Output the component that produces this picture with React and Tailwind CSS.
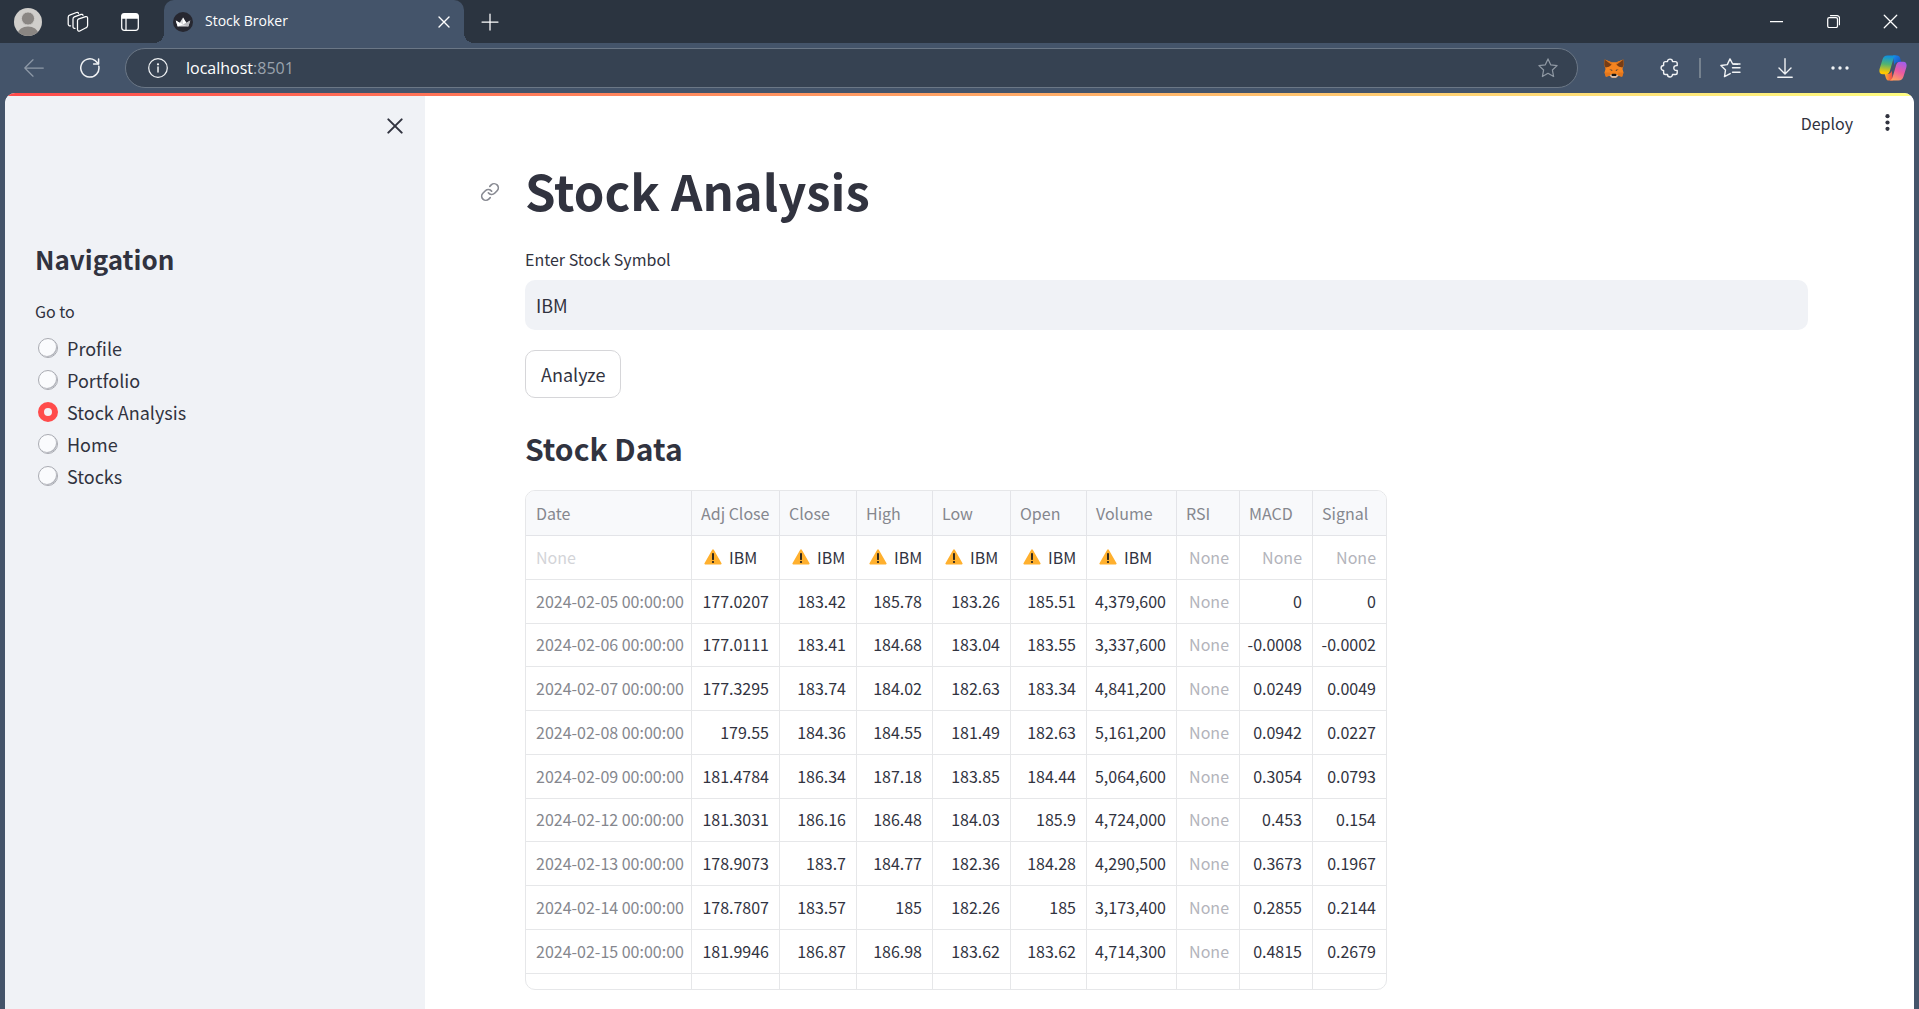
import { Link } from "lucide-react";

const SANS = "font-['Noto_Sans_CJK_SC',sans-serif]";
const CHROME = "font-['Open_Sans','Noto_Sans',sans-serif]";

const stroke = {
  fill: "none",
  stroke: "currentColor",
  strokeWidth: 1.25,
  strokeLinecap: "round",
  strokeLinejoin: "round",
};

function Avatar() {
  return (
    <svg width="28" height="28" viewBox="0 0 28 28">
      <defs>
        <clipPath id="avatar-disc">
          <circle cx="14" cy="14" r="14" />
        </clipPath>
      </defs>
      <g clipPath="url(#avatar-disc)">
        <rect width="28" height="28" fill="#d0cecb" />
        <ellipse cx="14" cy="25.5" rx="10" ry="7" fill="#8a8683" />
        <circle cx="14" cy="10.5" r="6.6" fill="#8a8683" stroke="#d0cecb" strokeWidth="1" />
      </g>
    </svg>
  );
}

function Workspaces() {
  return (
    <svg width="22" height="22" viewBox="0 0 22 22" {...stroke}>
      <path d="M11.2 8.200 18.600 5.600a1.500 1.500 0 0 1 2 1.400v7.600a2.400 2.400 0 0 1-1.600 2.200l-6.200 3.200a1.600 1.600 0 0 1-2.300-1.400V10a2 2 0 0 1 .7-1.800Z" />
      <path d="M8 17.300c-1.200.3-2-.4-2-1.600V8c0-1 .5-1.700 1.400-2.100l6.700-2.500c.9-.3 1.600 0 1.900.9" />
      <path d="M3.600 14.900C2.100 15.100 1.200 14.200 1.200 13V6.200c0-1 .5-1.800 1.400-2.100L9.500 1.500c.9-.3 1.700 0 2 .8" />
    </svg>
  );
}

function TabActions() {
  return (
    <svg width="18" height="18" viewBox="0 0 18 18" {...stroke}>
      <rect x="0.7" y="0.7" width="16.6" height="16.6" rx="2.8" />
      <path d="M1 5V3.500A2.500 2.500 0 0 1 3.500 1h11A2.500 2.500 0 0 1 17 3.500V5Z" fill="currentColor" />
      <path d="M5 5.500V17" />
    </svg>
  );
}

function Crown() {
  return (
    <svg width="20" height="20" viewBox="0 0 20 20">
      <circle cx="10" cy="10" r="10" fill="#262730" />
      <path d="M2.800 8.600 6.600 11 10 5.600 13.400 11l3.900-2.400-2 6H4.700Z" fill="#d9d9dc" />
      <path d="M2.800 8.600 10 12.500 4.700 14.600ZM10 5.600V12.500L13.400 11Z" fill="#fff" />
      <path d="m17.300 8.600-7.300 3.900 5.300 2.100Z" fill="#b9b9be" />
    </svg>
  );
}

function Cross({ size, width = 1.4 }) {
  return (
    <svg width={size} height={size} viewBox="0 0 12 12" {...stroke} strokeWidth={width}>
      <path d="m1 1 10 10M11 1 1 11" />
    </svg>
  );
}

function Fox() {
  return (
    <svg width="20" height="19" viewBox="0 0 20 19">
      <path d="M.6.4 7.500 3.200h5L19.400.4l.3 5.600-1.200 4 1 3.600-1.400 4.200-3.800-1-2.200 2H7.900l-2.200-2-3.800 1L.5 13.600l1-3.600L.3 6Z" fill="#f5841f" />
      <path d="M.6.4 8.400 6.200 7.500 3.200ZM19.400.4l-7.800 5.800.9-3Z" fill="#e2761b" />
      <path d="M.6.4 7.600 5.700 5 7.700 1.500 8.600.3 6ZM19.400.4l-7 5.300L15 7.700l3.500.9L19.700 6Z" fill="#763d16" />
      <path d="m.5 13.600 5.200-.1.900 2.800-.9.500-3.800 1ZM19.500 13.600l-5.200-.1-.9 2.800.9.500 3.800 1Z" fill="#e4761b" />
      <path d="m5.300 10.500 2.700.2.400 1.200ZM14.700 10.500l-2.700.2-.4 1.200Z" fill="#233447" />
      <path d="m5.700 16.500 2.200-1.300h4.200l2.200 1.300-2.200 2.200H7.900Z" fill="#d7c1b3" />
      <path d="m7.900 15.300.5-.5h3.200l.5.500.2 1.800H7.700Z" fill="#161616" />
    </svg>
  );
}

function Puzzle() {
  return (
    <svg width="20" height="20" viewBox="0 0 20 20" {...stroke} strokeWidth="1.4">
      <path d="M7.500 3.600a2.500 2.500 0 0 1 5 0h2.900a1.800 1.800 0 0 1 1.800 1.800v2.200h-1a2.400 2.400 0 0 0 0 4.800h1v2.300a1.800 1.800 0 0 1-1.800 1.800h-2.900a2.500 2.500 0 0 1-5 0H5.400a1.800 1.800 0 0 1-1.800-1.800v-2.200a2.500 2.500 0 0 1 0-5V5.400a1.800 1.800 0 0 1 1.800-1.800Z" />
    </svg>
  );
}

function Star() {
  return (
    <svg width="20" height="20" viewBox="0 0 20 20" {...stroke}>
      <path d="m10 .9 2.700 5.900 6.400.8-4.700 4.400 1.200 6.500L10 15.300l-5.600 3.200L5.600 12 .9 7.600l6.400-.8Z" />
    </svg>
  );
}

function Favorites() {
  return (
    <svg width="21" height="20" viewBox="0 0 21 20" {...stroke} strokeWidth="1.4">
      <path d="M17.500 6.400 12.700 6 10 .9 7.300 6.600.9 7.500 5.500 12l-1 6.600 5.700-3" />
      <path d="M12.500 9.800h7.500M12.500 14.200h7.500M13.500 6h6.500" />
    </svg>
  );
}

function Download() {
  return (
    <svg width="16" height="20" viewBox="0 0 16 20" {...stroke} strokeWidth="1.4">
      <path d="M8 .8v15M2 10l6 6 6-6M.8 19.200h14.400" />
    </svg>
  );
}

function Copilot() {
  return (
    <svg width="28" height="26" viewBox="0 0 28 26">
      <defs>
        <linearGradient id="cp-left" x1="0.3" y1="0" x2="0.2" y2="1">
          <stop offset="0" stopColor="#0d91e1" />
          <stop offset="0.45" stopColor="#52b471" />
          <stop offset="0.9" stopColor="#ffc800" />
        </linearGradient>
        <linearGradient id="cp-right" x1="0.7" y1="0" x2="0.3" y2="1">
          <stop offset="0" stopColor="#a45ee8" />
          <stop offset="0.5" stopColor="#ec5aa0" />
          <stop offset="1" stopColor="#ffa15e" />
        </linearGradient>
        <linearGradient id="cp-top" x1="0" y1="0" x2="1" y2="1">
          <stop offset="0" stopColor="#1a8af0" />
          <stop offset="1" stopColor="#1748b5" />
        </linearGradient>
        <linearGradient id="cp-bottom" x1="0" y1="0" x2="1" y2="0">
          <stop offset="0" stopColor="#ffb52e" />
          <stop offset="1" stopColor="#ee3f4d" />
        </linearGradient>
      </defs>
      <path d="M14 .5h4c1.700 0 2.600 1 3.100 2.600L22.300 7h-3c-2.300 0-3.400 1.300-4 3.400Z" fill="url(#cp-top)" />
      <path d="M14 25.500h-4c-1.700 0-2.600-1-3.100-2.600L5.700 19h3c2.300 0 3.400-1.300 4-3.400Z" fill="url(#cp-bottom)" />
      <path d="M8.500.5h9c-2 .4-2.700 2-3.300 4L11 15.500c-.7 2.300-1.700 3.700-4.200 3.700H3.700C.6 19.200-.1 16.500.7 13.500L3.500 4.400C4.300 1.800 5.800.5 8.500.5Z" fill="url(#cp-left)" />
      <path d="M19.500 25.500h-9c2-.4 2.700-2 3.300-4L17 10.500c.7-2.300 1.700-3.700 4.200-3.700h3.100c3.100 0 3.800 2.700 3 5.700l-2.800 9.100c-.8 2.600-2.300 3.900-5 3.900Z" fill="url(#cp-right)" />
    </svg>
  );
}

function Warning() {
  return (
    <svg width="18" height="16" viewBox="0 0 18 16" className="shrink-0">
      <path d="M8.200.8a.9.9 0 0 1 1.600 0l7.700 13.500a.8.8 0 0 1-.7 1.200H1.200a.8.8 0 0 1-.7-1.200Z" fill="#ffb02e" />
      <path d="M9 4.800v5.400" stroke="#1c1c1c" strokeWidth="1.8" strokeLinecap="round" />
      <circle cx="9" cy="13" r="1.1" fill="#1c1c1c" />
    </svg>
  );
}

function TabStrip() {
  return (
    <div className="flex h-[43px] items-center bg-[#2b3440] text-white">
      <button aria-label="Profile" className="ml-3.5 flex h-8 w-7 items-center justify-center"><Avatar /></button>
      <button aria-label="Workspaces" className="ml-[25px] flex h-8 w-[22px] items-center justify-center"><Workspaces /></button>
      <button aria-label="Tab actions" className="ml-8 flex h-8 w-[18px] items-center justify-center"><TabActions /></button>
      <div className="relative ml-[25px] flex h-full w-[300px] items-center self-end rounded-t-[10px] bg-[#44546a] pr-3.5 pl-[9px]">
        <span className="absolute bottom-0 -left-2.5 size-2.5 bg-[radial-gradient(circle_at_0_0,#2b3440_10px,#44546a_10px)]" />
        <span className="absolute -right-2.5 bottom-0 size-2.5 bg-[radial-gradient(circle_at_100%_0,#2b3440_10px,#44546a_10px)]" />
        <Crown />
        <span className="ml-3 flex-1 pb-0.5 text-sm leading-5">Stock Broker</span>
        <button aria-label="Close tab" className="flex size-3 items-center justify-center"><Cross size={12} /></button>
      </div>
      <button aria-label="New tab" className="ml-[18px] flex size-4 items-center justify-center">
        <svg width="18" height="18" viewBox="0 0 18 18" {...stroke} className="shrink-0"><path d="M9 1v16M1 9h16" /></svg>
      </button>
      <div className="ml-auto flex h-full">
        <button aria-label="Minimize" className="flex w-[57px] items-center justify-center">
          <svg width="13" height="13" viewBox="0 0 13 13" {...stroke}><path d="M0 6.500h13" /></svg>
        </button>
        <button aria-label="Restore" className="flex w-[57px] items-center justify-center">
          <svg width="13" height="13" viewBox="0 0 13 13" {...stroke}>
            <rect x="0.7" y="2.7" width="9.8" height="9.8" rx="1.5" />
            <path d="M3.500.7h6.500a2.500 2.500 0 0 1 2.500 2.500v6.500" />
          </svg>
        </button>
        <button aria-label="Close" className="flex w-[57px] items-center justify-center"><Cross size={15} width={1} /></button>
      </div>
    </div>
  );
}

function Toolbar() {
  const btn = "flex h-10 w-14 items-center justify-center";
  return (
    <div className="flex h-[50px] items-center pl-1.5 text-[#f1f3f5]">
      <button aria-label="Back" className="flex h-10 w-14 items-center justify-center text-[#8e99a7]">
        <svg width="20" height="18" viewBox="0 0 20 18" {...stroke}><path d="M19.300 9H.8M9 .8.8 9 9 17.200" /></svg>
      </button>
      <button aria-label="Refresh" className={btn}>
        <svg width="20" height="20" viewBox="0 0 20 20" {...stroke} strokeWidth="1.5">
          <path d="M18.800 8.200A9.100 9.100 0 1 1 14.800 2.300l3.500 3.300" />
          <path d="M18.600.9v5h-5" />
        </svg>
      </button>
      <div className="ml-[7px] flex h-10 flex-1 items-center rounded-full border border-[#6b7786] bg-[#364252] pr-[19px] pl-[22px]">
        <svg width="20" height="20" viewBox="0 0 20 20" {...stroke}>
          <circle cx="10" cy="10" r="9.3" />
          <path d="M10 9v5" strokeWidth="1.5" />
          <circle cx="10" cy="6.3" r="0.5" fill="currentColor" />
        </svg>
        <span className="ml-[18px] flex-1 text-base leading-6 text-white">
          localhost<span className="text-[#9aa2ad]">:8501</span>
        </span>
        <button aria-label="Add to favorites" className="text-[#8f98a3]"><Star /></button>
      </div>
      <button aria-label="Wallet" className="ml-2 flex h-10 w-14 items-center justify-center"><Fox /></button>
      <button aria-label="Extensions" className={btn}><Puzzle /></button>
      <span className="mx-px h-5 w-0.5 bg-[#76828f]" />
      <button aria-label="Favorites" className={btn}><Favorites /></button>
      <button aria-label="Downloads" className="flex h-10 w-[54px] items-center justify-center"><Download /></button>
      <button aria-label="More" className="flex h-10 w-[55px] items-center justify-center">
        <svg width="18" height="4" viewBox="0 0 18 4" fill="currentColor">
          <circle cx="2" cy="2" r="1.7" /><circle cx="9" cy="2" r="1.7" /><circle cx="16" cy="2" r="1.7" />
        </svg>
      </button>
      <button aria-label="Copilot" className="flex h-10 w-[52px] items-center justify-center"><Copilot /></button>
    </div>
  );
}

const PAGES = ["Profile", "Portfolio", "Stock Analysis", "Home", "Stocks"];

function Sidebar() {
  return (
    <aside className="w-[420px] shrink-0 bg-[#f0f2f6] px-[30px]">
      <div className="-mr-2 flex justify-end pt-[22px]">
        <button aria-label="Close sidebar" className="flex size-4 items-center justify-center"><Cross size={16} width={1.5} /></button>
      </div>
      <h2 className="mt-[107px] text-[26px] leading-9 font-semibold">Navigation</h2>
      <fieldset className="mt-[22px]">
        <legend className="mb-[9px] block text-base leading-6">Go to</legend>
        {PAGES.map((page) => (
          <label key={page} className="flex h-8 items-center gap-[9px] pl-[3px] text-lg leading-8">
            <input
              type="radio"
              name="page"
              defaultChecked={page === "Stock Analysis"}
              className="size-5 appearance-none rounded-full border border-[#a9abb2] bg-[#fafbfd] shadow-[inset_-1px_-1px_0_#b4b6bd] checked:border-[6px] checked:border-[#ff4b4b] checked:bg-[#f5f0f4] checked:shadow-none"
            />
            {page}
          </label>
        ))}
      </fieldset>
    </aside>
  );
}

const COLUMNS = [
  ["Date", "w-[166px]"],
  ["Adj Close", "w-[88px]"],
  ["Close", "w-[77px]"],
  ["High", "w-[76px]"],
  ["Low", "w-[78px]"],
  ["Open", "w-[76px]"],
  ["Volume", "w-[90px]"],
  ["RSI", "w-[63px]"],
  ["MACD", "w-[73px]"],
  ["Signal", "w-[73px]"],
];

const ROWS = [
  ["None", "IBM", "IBM", "IBM", "IBM", "IBM", "IBM", "None", "None", "None"],
  ["2024-02-05 00:00:00", "177.0207", "183.42", "185.78", "183.26", "185.51", "4,379,600", "None", "0", "0"],
  ["2024-02-06 00:00:00", "177.0111", "183.41", "184.68", "183.04", "183.55", "3,337,600", "None", "-0.0008", "-0.0002"],
  ["2024-02-07 00:00:00", "177.3295", "183.74", "184.02", "182.63", "183.34", "4,841,200", "None", "0.0249", "0.0049"],
  ["2024-02-08 00:00:00", "179.55", "184.36", "184.55", "181.49", "182.63", "5,161,200", "None", "0.0942", "0.0227"],
  ["2024-02-09 00:00:00", "181.4784", "186.34", "187.18", "183.85", "184.44", "5,064,600", "None", "0.3054", "0.0793"],
  ["2024-02-12 00:00:00", "181.3031", "186.16", "186.48", "184.03", "185.9", "4,724,000", "None", "0.453", "0.154"],
  ["2024-02-13 00:00:00", "178.9073", "183.7", "184.77", "182.36", "184.28", "4,290,500", "None", "0.3673", "0.1967"],
  ["2024-02-14 00:00:00", "178.7807", "183.57", "185", "182.26", "185", "3,173,400", "None", "0.2855", "0.2144"],
  ["2024-02-15 00:00:00", "181.9946", "186.87", "186.98", "183.62", "183.62", "4,714,300", "None", "0.4815", "0.2679"],
];

function Cell({ value, index }) {
  if (value === "IBM") {
    return (
      <td className="border-r border-b border-[#e6e7e9] pb-0.5 pl-3">
        <span className="flex items-center gap-[7px]"><Warning />IBM</span>
      </td>
    );
  }
  if (index === 0) {
    return (
      <td className={value === "None"
        ? "border-r border-b border-[#e6e7e9] pb-0.5 pl-2.5 text-[#d3d4d8]"
        : "border-r border-b border-[#e6e7e9] pb-0.5 pl-2.5 text-[#85878e]"}>
        {value}
      </td>
    );
  }
  return (
    <td className={value === "None"
      ? "border-r border-b border-[#e6e7e9] pr-2.5 pb-0.5 text-right text-[#b3b4bb] last:border-r-0"
      : "border-r border-b border-[#e6e7e9] pr-2.5 pb-0.5 text-right last:border-r-0"}>
      {value}
    </td>
  );
}

function StockTable() {
  return (
    <div className="w-[862px] overflow-hidden rounded-[10px] border border-[#e6e7e9]">
      <table className="w-full table-fixed border-separate border-spacing-0 text-base leading-6 whitespace-nowrap">
        <colgroup>
          {COLUMNS.map(([name, width]) => <col key={name} className={width} />)}
        </colgroup>
        <thead>
          <tr className="h-[45px] bg-[#f8f9fb] text-left text-[#85878e]">
            {COLUMNS.map(([name]) => (
              <th key={name} className="border-r border-b border-[#e3e4e8] pl-[9px] font-normal first:pl-2.5 last:border-r-0">{name}</th>
            ))}
          </tr>
        </thead>
        <tbody>
          {ROWS.map((row, r) => (
            <tr key={r} className="h-11 nth-[4n+3]:h-[43px]">
              {row.map((value, i) => <Cell key={i} value={value} index={i} />)}
            </tr>
          ))}
          <tr className="h-[15px]">
            {COLUMNS.map(([name]) => <td key={name} className="border-r border-[#e6e7e9] last:border-r-0" />)}
          </tr>
        </tbody>
      </table>
    </div>
  );
}

function Main() {
  return (
    <main className="min-w-0 flex-1 bg-white">
      <header className="flex h-[53px] items-center justify-end gap-7 pr-[21px]">
        <button className="text-base leading-6">Deploy</button>
        <button aria-label="Main menu" className="flex w-3 justify-center">
          <svg width="5" height="17" viewBox="0 0 5 17" fill="currentColor">
            <circle cx="2.5" cy="2.2" r="2.1" /><circle cx="2.5" cy="8.5" r="2.1" /><circle cx="2.5" cy="14.8" r="2.1" />
          </svg>
        </button>
      </header>
      <div className="pr-[106px] pl-[100px]">
        <div className="relative pt-2">
          <a href="#stock-analysis" aria-label="Link to heading" className="absolute top-[33px] -left-[45px] text-[#888a92]">
            <Link size={20} strokeWidth={2} />
          </a>
          <h1 id="stock-analysis" className="text-[49px] leading-[66px] font-bold">Stock Analysis</h1>
        </div>
        <label htmlFor="symbol" className="mt-6 block text-base leading-6">Enter Stock Symbol</label>
        <input id="symbol" defaultValue="IBM" className="mt-[9px] block h-[50px] w-full rounded-[10px] bg-[#f0f2f6] px-[11px] text-lg" />
        <button className="mt-5 block h-12 rounded-[10px] border border-[#d6d6d9] px-[15px] text-lg">Analyze</button>
        <h2 className="mt-7 mb-5 text-[30px] leading-[44px] font-semibold">Stock Data</h2>
        <StockTable />
      </div>
    </main>
  );
}

export default function App() {
  return (
    <div className={`flex min-h-screen flex-col bg-[#44546a] ${CHROME}`}>
      <TabStrip />
      <Toolbar />
      <div className={`mx-[5px] flex flex-1 flex-col overflow-hidden rounded-t-[10px] bg-white text-[#31333f] ${SANS}`}>
        <div className="h-[3px] bg-[linear-gradient(90deg,#ff4b4b,#fffd80)]" />
        <div className="flex flex-1">
          <Sidebar />
          <Main />
        </div>
      </div>
    </div>
  );
}
